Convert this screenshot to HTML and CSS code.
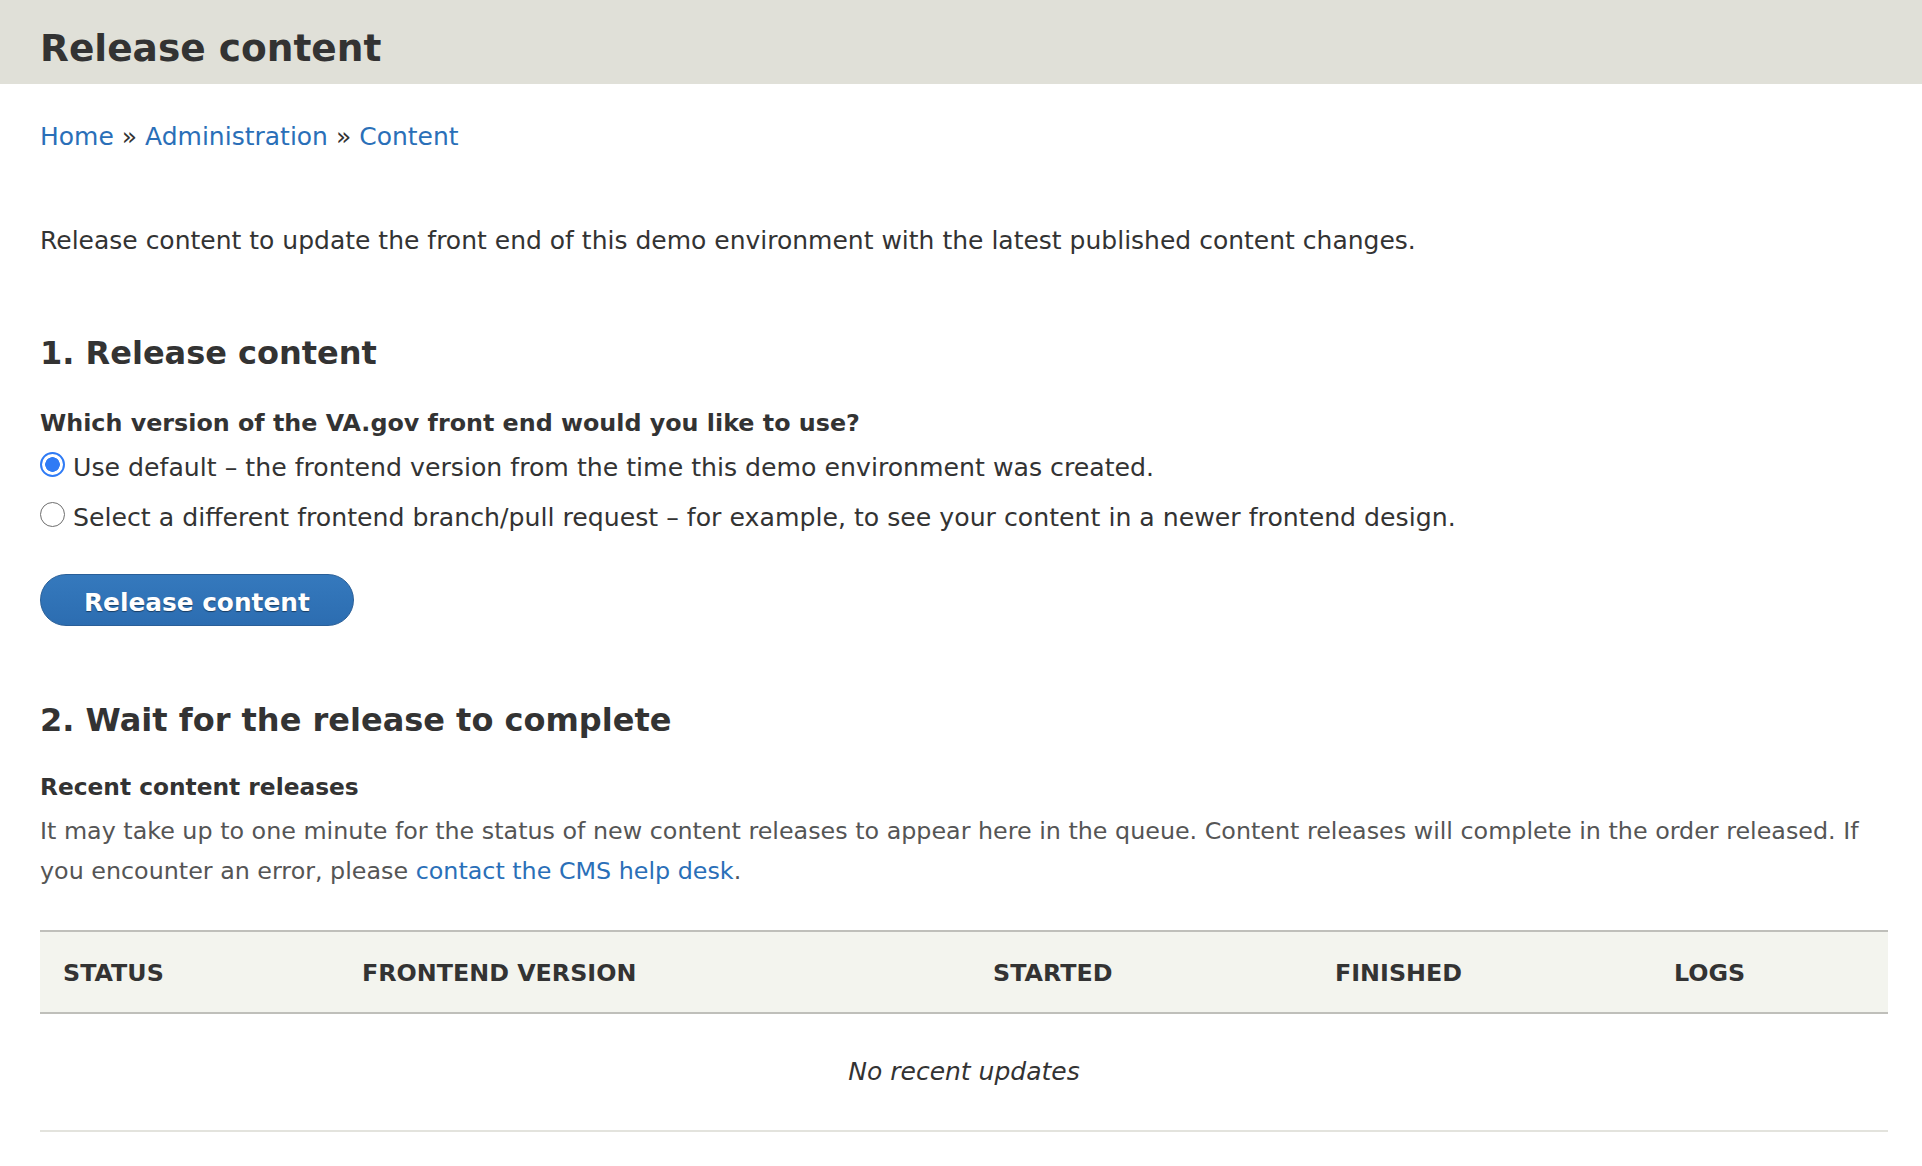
FILE: index.html
```html
<!DOCTYPE html>
<html lang="en">
<head>
<meta charset="utf-8">
<title>Release content</title>
<link rel="stylesheet" href="styles.css">
</head>
<body>
<header class="page-header">
  <h1 class="page-title">Release content</h1>
</header>
<main class="content">
  <nav class="breadcrumb"><a href="#" class="link">Home</a> » <a href="#" class="link">Administration</a> » <a href="#" class="link">Content</a></nav>
  <p class="intro">Release content to update the front end of this demo environment with the latest published content changes.</p>

  <h2 class="section-title section-first">1. Release content</h2>
  <form class="release-form" onsubmit="return false">
    <div class="form-label">Which version of the VA.gov front end would you like to use?</div>
    <div class="radio-list">
      <label class="radio-row"><input type="radio" name="fe" class="radio" checked><span>Use default – the frontend version from the time this demo environment was created.</span></label>
      <label class="radio-row"><input type="radio" name="fe" class="radio"><span>Select a different frontend branch/pull request – for example, to see your content in a newer frontend design.</span></label>
    </div>
    <button type="submit" class="button-primary">Release content</button>
  </form>

  <h2 class="section-title section-second">2. Wait for the release to complete</h2>
  <h3 class="sub-title">Recent content releases</h3>
  <p class="help">It may take up to one minute for the status of new content releases to appear here in the queue. Content releases will complete in the order released. If you encounter an error, please <a href="#" class="link">contact the CMS help desk</a>.</p>

  <table class="releases">
    <colgroup>
      <col class="col-status">
      <col class="col-version">
      <col class="col-started">
      <col class="col-finished">
      <col class="col-logs">
    </colgroup>
    <thead>
      <tr>
        <th>Status</th>
        <th>Frontend version</th>
        <th>Started</th>
        <th>Finished</th>
        <th>Logs</th>
      </tr>
    </thead>
    <tbody>
      <tr><td colspan="5" class="empty">No recent updates</td></tr>
    </tbody>
  </table>
</main>
</body>
</html>
```
FILE: styles.css
```css
html, body {
  margin: 0;
  padding: 0;
  background: #ffffff;
}

body {
  font-family: "DejaVu Sans", "Lucida Grande", sans-serif;
  font-size: 25px;
  color: #333333;
}

.page-header {
  background: #e0e0d8;
  padding: 20px 40px 8px;
}

.page-title {
  margin: 0;
  font-size: 37.5px;
  line-height: 56px;
  font-weight: bold;
  color: #333333;
}

.content {
  padding: 0 34px 0 40px;
}

.link {
  color: #2a6fb8;
  text-decoration: none;
}

.breadcrumb {
  margin-top: 33px;
  line-height: 40px;
  color: #333333;
}

.intro {
  margin: 64px 0 0;
  line-height: 40px;
}

.section-title {
  margin: 0;
  font-size: 32px;
  line-height: 40px;
  font-weight: bold;
  color: #333333;
}

.section-first {
  margin-top: 72px;
}

.section-second {
  margin-top: 74px;
}

.release-form {
  margin: 0;
}

.form-label {
  margin-top: 32px;
  font-size: 23.8px;
  line-height: 36px;
  font-weight: bold;
}

.radio-list {
  margin-top: 7px;
  display: flex;
  flex-direction: column;
  gap: 10px;
}

.radio-row {
  display: flex;
  align-items: flex-start;
  gap: 8px;
  font-size: 25.2px;
  line-height: 40px;
  color: #333333;
}

.radio {
  appearance: none;
  -webkit-appearance: none;
  margin: 3.5px 0 0 0;
  width: 25px;
  height: 25px;
  flex: 0 0 25px;
  border-radius: 50%;
  border: 1.5px solid #6e6e6e;
  background: #ffffff;
  box-sizing: border-box;
}

.radio:checked {
  border: 2px solid #2f7bf5;
  background: radial-gradient(circle, #2f7bf5 0 7px, #ffffff 7.6px);
}

.button-primary {
  margin-top: 36px;
  display: block;
  height: 52px;
  box-sizing: border-box;
  padding: 5px 43px 0 43px;
  border: 1px solid #2a5f98;
  border-radius: 26px;
  background: linear-gradient(to bottom, #3579bd, #2c6db1);
  color: #ffffff;
  font-family: "DejaVu Sans", "Lucida Grande", sans-serif;
  font-size: 24.8px;
  font-weight: bold;
  line-height: 45px;
  text-shadow: 0 1px 1px rgba(0, 0, 0, 0.45);
  cursor: pointer;
}

.sub-title {
  margin: 29px 0 0;
  font-size: 23.3px;
  line-height: 36px;
  font-weight: bold;
  color: #333333;
}

.help {
  margin: 6px 0 0;
  font-size: 23.8px;
  line-height: 40px;
  color: #555555;
}

.releases {
  margin-top: 39px;
  width: 100%;
  border-collapse: collapse;
  table-layout: fixed;
}

.col-status { width: 299px; }
.col-version { width: 631px; }
.col-started { width: 342px; }
.col-finished { width: 339px; }
.col-logs { width: auto; }

.releases thead th {
  background: #f3f4ee;
  border-top: 2px solid #bfbfba;
  border-bottom: 2px solid #bfbfba;
  padding: 2px 23px 0;
  height: 80px;
  box-sizing: border-box;
  line-height: 78px;
  text-align: left;
  text-transform: uppercase;
  font-size: 23.8px;
  font-weight: bold;
  color: #333333;
}

.releases td.empty {
  padding: 38px 23px;
  line-height: 40px;
  text-align: center;
  font-style: italic;
  color: #333333;
  border-bottom: 2px solid #e3e3dd;
}
```
